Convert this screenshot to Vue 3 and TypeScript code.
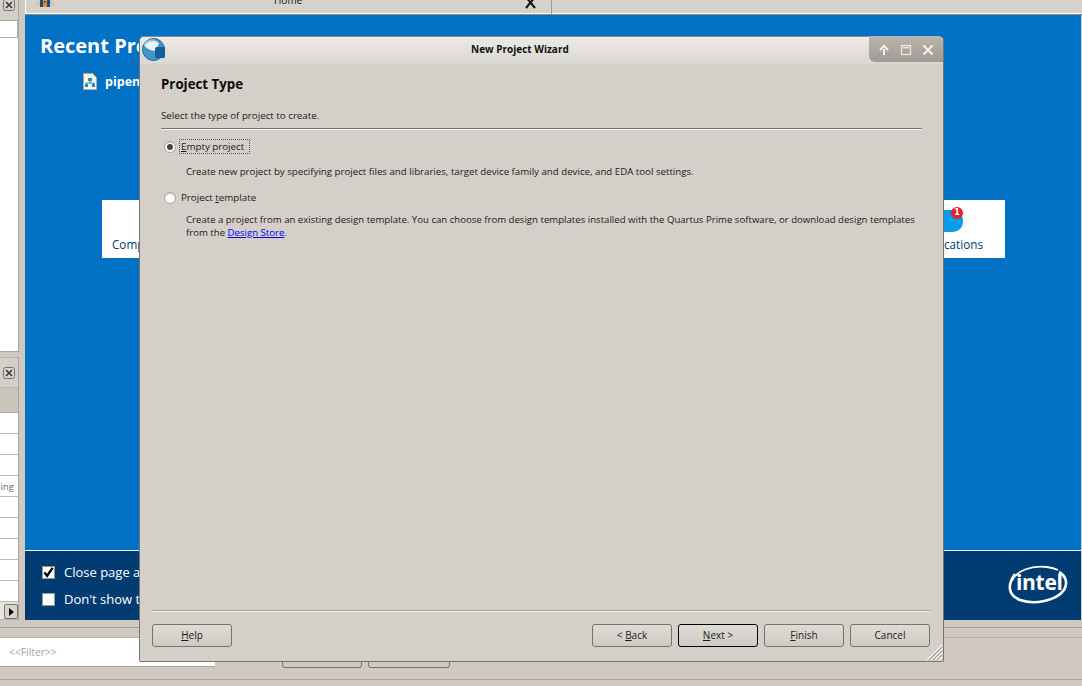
<script setup lang="ts">
const rows: string[] = ['', '', '', 'ing', '', '', '', '', '']
</script>

<template>
  <div class="desk">
    <aside class="side">
      <section class="dock dock-top">
        <div class="dock-head">
          <svg class="xbox" width="12" height="12" viewBox="0 0 12 12"><rect x=".5" y=".5" width="11" height="11" rx="2" fill="#d8d4cd" stroke="#77736c"/><path d="M3 3l6 6M9 3l-6 6" stroke="#333" stroke-width="1.5"/></svg>
        </div>
        <div class="dock-white"><div class="dock-cell"></div></div>
      </section>
      <section class="dock dock-low">
        <div class="low-head">
          <svg class="xbox" width="12" height="12" viewBox="0 0 12 12"><rect x=".5" y=".5" width="11" height="11" rx="2" fill="#d8d4cd" stroke="#77736c"/><path d="M3 3l6 6M9 3l-6 6" stroke="#333" stroke-width="1.5"/></svg>
        </div>
        <div class="low-band"></div>
        <div class="low-rows">
          <div v-for="(r, i) in rows" :key="i" class="low-row">{{ r }}</div>
        </div>
        <div class="low-scroll">
          <span class="scroll-btn"><i class="tri"></i></span>
        </div>
      </section>
    </aside>

    <main class="home">
      <header class="tabbar">
        <div class="tab">
          <svg class="house" width="20" height="12" viewBox="0 0 20 12"><path d="M0 6L10-4l10 10-2 3-8-8-8 8z" fill="#d3c7ae"/><rect x="5" y="-3" width="10" height="12" fill="#1b4a8c"/><rect x="8" y="0" width="4" height="9" fill="#ef8c14"/><rect x="9" y="3" width="1.5" height="2" fill="#1b4a8c"/></svg>
          <span class="tab-title">Home</span>
          <svg class="tab-x" width="14" height="9" viewBox="0 0 14 9"><path d="M2-3l9 11M11-3L2 8" stroke="#111" stroke-width="2"/></svg>
        </div>
      </header>
      <div class="blue">
        <h1 class="recent">Recent Projects</h1>
        <div class="recent-item">
          <svg width="14" height="17" viewBox="0 0 14 17"><path d="M.5.5h9l4 4v12H.5z" fill="#fbf4e2" stroke="#b8a88e"/><rect x="5" y="5" width="4" height="3" fill="#0f8fd6"/><path d="M7 8v2M3 12v-2h8v2" stroke="#0f8fd6" fill="none"/><rect x="2" y="11" width="3" height="3" fill="#0f8fd6"/><rect x="9" y="11" width="3" height="3" fill="#0f8fd6"/></svg>
          <span>pipen.qpf</span>
        </div>
        <div class="cards">
          <div class="card"><span>Compare Editions</span></div>
          <div class="card card-right">
            <div class="bubble"><b class="badge">1</b></div>
            <span>Notifications</span>
          </div>
        </div>
      </div>
      <footer class="navy">
        <div class="checks">
          <label class="chk"><span class="box"><svg width="11" height="11" viewBox="0 0 12 12"><path d="M1.5 6l3 3.5L10.5 1" fill="none" stroke="#000" stroke-width="2.6"/></svg></span>Close page after project load</label>
          <label class="chk"><span class="box"></span>Don't show this screen again</label>
        </div>
        <div class="intel">
          <svg width="62" height="42" viewBox="0 0 62 42"><path d="M8 10C0 21 1 31 13 36c14 5 36 1 44-10 4-7 2-14-5-18" fill="none" stroke="#fff" stroke-width="2.6"/><path d="M5 17C9 7 24 1 40 3c4 .5 8 1.5 11 3" fill="none" stroke="#fff" stroke-width="1.8"/></svg>
          <span class="intel-text">intel</span>
        </div>
      </footer>
    </main>

    <div class="bottom">
      <div class="strip"></div>
      <div class="filter-row">
        <div class="filter">&lt;&lt;Filter&gt;&gt;</div>
        <span class="back-btn"></span>
        <span class="back-btn back-btn-2"></span>
      </div>
      <div class="status"></div>
    </div>

    <div class="wizard">
      <div class="titlebar">
        <svg class="logo" width="26" height="26" viewBox="0 0 26 26">
          <circle cx="12.5" cy="12.5" r="11" fill="#3f94c8" stroke="#1c6d9f"/>
          <path d="M3 8c4-5 11-6 15-2l-3 8C10 14 6 12 3 8z" fill="#eef3f4"/>
          <path d="M4 5c3-3 9-4 12-1l2 2C13 3 8 4 3 8z" fill="#8cc4e2"/>
          <rect x="14" y="10" width="10" height="11" rx="1.5" fill="#125f9c"/>
        </svg>
        <span class="title">New Project Wizard</span>
        <div class="wm">
          <svg width="12" height="12" viewBox="0 0 12 12"><path d="M6 11V5M2 6l4-4 4 4" fill="none" stroke="#f4f3f0" stroke-width="2"/></svg>
          <svg width="12" height="12" viewBox="0 0 12 12"><rect x="1.5" y="1.5" width="9" height="9" fill="none" stroke="#eeedea" stroke-width="1.2"/><rect x="3" y="3" width="6" height="1.4" fill="#eeedea"/></svg>
          <svg width="12" height="12" viewBox="0 0 12 12"><path d="M1.5 1.5l9 9M10.5 1.5l-9 9" stroke="#f4f3f0" stroke-width="2"/></svg>
        </div>
      </div>
      <div class="body">
        <h2 class="ptype">Project Type</h2>
        <p class="lead">Select the type of project to create.</p>
        <hr class="rule" />
        <div class="opt opt-first">
          <span class="radio on"></span>
          <span class="focus"><u>E</u>mpty project</span>
        </div>
        <p class="desc desc-a">Create new project by specifying project files and libraries, target device family and device, and EDA tool settings.</p>
        <div class="opt opt-second">
          <span class="radio"></span>
          <span class="plain">Project <u>t</u>emplate</span>
        </div>
        <p class="desc desc-b">Create a project from an existing design template. You can choose from design templates installed with the Quartus Prime software, or download design templates<br />from the <a class="link">Design Store</a>.</p>
        <div class="grow"></div>
        <hr class="rule rule-low" />
        <div class="actions">
          <button class="btn"><u>H</u>elp</button>
          <span class="grow"></span>
          <button class="btn">&lt; <u>B</u>ack</button>
          <button class="btn default"><u>N</u>ext &gt;</button>
          <button class="btn"><u>F</u>inish</button>
          <button class="btn">Cancel</button>
        </div>
      </div>
      <svg class="grip" width="18" height="18" viewBox="0 0 18 18"><path d="M2 17L17 2M6 17L17 6M10 17l7-7M14 17l3-3" stroke="#fff" stroke-width="1"/><path d="M4 17L17 4M8 17l9-9M12 17l5-5" stroke="#9d9a93" stroke-width="1"/></svg>
    </div>
  </div>
</template>

<style>
html, body { margin: 0; padding: 0; overflow: hidden; }
</style>

<style scoped>
.desk {
  position: relative;
  width: 1082px;
  height: 686px;
  overflow: hidden;
  background: #cfc9c1;
  display: grid;
  grid-template-columns: 25px 1fr;
  grid-template-rows: 620px 1fr;
  font-family: "Open Sans", sans-serif;
}
.side { display: flex; flex-direction: column; }
.dock { width: 19px; box-sizing: border-box; border-right: 1px solid #a8a49c; overflow: hidden; }
.dock-top { height: 352px; display: flex; flex-direction: column; border-bottom: 1px solid #a8a49c; }
.dock-head { height: 20px; background: #d4d0c9; position: relative; }
.xbox { position: absolute; left: 3px; top: -1px; }
.dock-white { flex: 1; background: #fff; border-top: 1px solid #a8a49c; display: flex; flex-direction: column; }
.dock-cell { height: 16px; border-bottom: 1px solid #b4b0a8; border-right: 1px solid #b4b0a8; }
.dock-low { margin-top: 5px; height: 263px; display: flex; flex-direction: column; border-top: 1px solid #b4b0a8; border-bottom: 1px solid #b4b0a8; background: #d4d0c9; }
.low-head { height: 29px; position: relative; }
.low-head .xbox { top: 9px; }
.low-band { height: 25px; background: #c9c5bd; border-top: 1px solid #bdb9b1; box-sizing: border-box; }
.low-rows { display: flex; flex-direction: column; background: #fff; border-top: 1px solid #b4b0a8; }
.low-row { height: 21px; box-sizing: border-box; border-bottom: 1px solid #bdb9b1; font-size: 9.5px; color: #6c6c6c; text-align: right; padding-right: 4px; line-height: 21px; }
.low-scroll { flex: 1; display: flex; justify-content: flex-end; align-items: flex-end; background: #e8e5e0; }
.scroll-btn { width: 14px; height: 15px; background: #d8d4cd; border: 1px solid #77736c; border-radius: 2px; box-sizing: border-box; display: flex; align-items: center; justify-content: center; }
.tri { width: 0; height: 0; border-left: 5px solid #000; border-top: 4px solid transparent; border-bottom: 4px solid transparent; }

.home { display: flex; flex-direction: column; min-width: 0; }
.tabbar { height: 15px; background: #d6d1ca; border-bottom: 1px solid #8f8a81; box-shadow: inset 0 -1px 0 #fff; box-sizing: border-box; }
.tab { width: 527px; height: 14px; position: relative; border-left: 1px solid #fff; border-right: 1px solid #a09c94; box-sizing: border-box; }
.house { position: absolute; left: 9px; top: -2px; }
.tab-title { position: absolute; left: 248px; top: -6px; font-size: 10px; line-height: 12px; color: #111; }
.tab-x { position: absolute; left: 498px; top: 0; }
.blue { flex: 1; background: #0071c5; color: #fff; padding: 17px 15px 0; display: flex; flex-direction: column; margin-right: 1px; }
.recent { margin: 0; font-size: 20px; line-height: 28px; font-weight: 700; }
.recent-item { display: flex; align-items: center; gap: 8px; margin: 13px 0 0 43px; font-size: 12.5px; font-weight: 700; height: 17px; }
.cards { margin: 110px 61px 0 62px; display: flex; justify-content: space-between; }
.card { width: 220px; height: 58px; background: #fff; color: #003c71; font-size: 11.7px; padding: 37px 0 0 10px; box-sizing: border-box; position: relative; line-height: 14px; }
.card-right { text-align: right; padding: 37px 22px 0 0; }
.bubble { position: absolute; right: 42px; top: 10px; width: 30px; height: 22px; border-radius: 10px; background: #0a9de8; }
.badge { position: absolute; right: 0; top: -3px; width: 12px; height: 12px; border-radius: 50%; background: #e0232e; color: #fff; font: 700 8px/12px "DejaVu Sans", sans-serif; text-align: center; }
.navy { height: 70px; background: #003c71; border-top: 1px solid #fff; box-sizing: border-box; color: #fff; font-size: 13px; display: flex; justify-content: space-between; margin-right: 1px; }
.checks { padding: 14px 0 0 17px; display: flex; flex-direction: column; gap: 13px; }
.chk { display: flex; align-items: center; gap: 9px; height: 14px; }
.box { width: 13px; height: 13px; box-sizing: border-box; background: #fff; border: 1px solid #9b958b; display: flex; align-items: center; justify-content: center; }
.intel { position: relative; width: 62px; height: 42px; margin: 13px 12px 0 0; }
.intel svg { position: absolute; left: 0; top: 0; }
.intel-text { position: absolute; left: 9px; top: 3px; font-size: 21px; line-height: 30px; font-weight: 700; color: #fff; letter-spacing: -.3px; }

.bottom { grid-column: 1 / -1; display: flex; flex-direction: column; }
.strip { box-sizing: border-box; margin-top: 7px; border-top: 1px solid #a8a49c; border-bottom: 1px solid #b8b4ac; height: 11px; }
.filter-row { height: 29px; display: flex; position: relative; }
.filter { width: 215px; background: #fff; border-bottom: 1px solid #a8a49c; box-sizing: border-box; padding-left: 9px; font-size: 10.3px; line-height: 28px; color: #a5a5a5; }
.back-btn { position: absolute; left: 282px; top: 0; width: 80px; height: 30px; border: 1px solid #77736c; border-radius: 3px; box-sizing: border-box; }
.back-btn-2 { left: 368px; width: 82px; }
.status { margin-top: 12px; border-top: 1px solid #a8a49c; flex: 1; }

.wizard {
  position: absolute;
  left: 139px;
  top: 36px;
  width: 805px;
  height: 626px;
  box-sizing: border-box;
  border: 1px solid #77756f;
  border-top-color: #8a8881;
  border-radius: 5px 5px 2px 2px;
  background: #d4d0c9;
  display: flex;
  flex-direction: column;
  color: #1a1a1a;
}
.titlebar { height: 27px; flex: none; position: relative; background: linear-gradient(#edebe7, #dad7d1); border-radius: 4px 4px 0 0; text-align: center; }
.logo { position: absolute; left: 1px; top: 0; }
.title { position: absolute; left: 331px; top: 6px; font-size: 10px; line-height: 13px; font-weight: 700; color: #111; }
.wm { position: absolute; right: 0; top: -1px; width: 74px; height: 26px; border-radius: 0 5px 0 6px; background: linear-gradient(#b8b5ad, #9f9c95); display: flex; align-items: center; justify-content: center; gap: 10px; padding-top: 1px; box-sizing: border-box; }
.body { flex: 1; display: flex; flex-direction: column; padding: 0 13px 14px 12px; min-height: 0; }
.ptype { margin: 12px 0 0 9px; font-size: 13.3px; line-height: 16px; font-weight: 700; color: #0c0c0c; }
.lead { margin: 17px 0 0 9px; font-size: 9.75px; line-height: 13px; }
.rule { margin: 6px 8px 0 9px; height: 2px; border: 0; background: linear-gradient(#77756f 50%, #f4f2ee 50%); }
.opt { display: flex; align-items: center; margin-left: 12px; font-size: 9.75px; height: 15px; }
.opt-first { margin-top: 9px; }
.opt-second { margin-top: 12px; }
.radio { width: 12px; height: 12px; border-radius: 50%; background: #fdfdfc; border: 1px solid #a8a49c; box-shadow: inset 0 1px 1px #ccc; box-sizing: border-box; flex: none; position: relative; }
.radio.on::after { content: ""; position: absolute; left: 2px; top: 2px; width: 6px; height: 6px; border-radius: 50%; background: #444; }
.focus { margin-left: 3px; border: 1px dotted #555; padding: 0 1px; line-height: 13px; height: 15px; box-sizing: border-box; width: 71px; white-space: nowrap; }
.plain { margin-left: 5px; }
.desc { margin: 0 0 0 34px; line-height: 13px; width: 745px; }
.desc-a { margin-top: 11px; font-size: 9.7px; }
.desc-b { margin-top: 8px; font-size: 9.62px; }
.link { color: #0000ee; text-decoration: underline; }
.grow { flex: 1; }
.rule-low { margin: 0; background: linear-gradient(#a3a098 50%, #f4f2ee 50%); }
.actions { display: flex; gap: 6px; margin-top: 12px; height: 23px; flex: none; }
.btn { width: 80px; height: 23px; box-sizing: border-box; border: 1px solid #77736c; border-radius: 3px; background: linear-gradient(#dedbd5, #cfcbc4); font-family: "Open Sans", sans-serif; font-size: 10px; line-height: 13px; color: #1a1a1a; padding: 0; }
.btn.default { border-color: #000; }
.grip { position: absolute; right: 0; bottom: 0; }
</style>
